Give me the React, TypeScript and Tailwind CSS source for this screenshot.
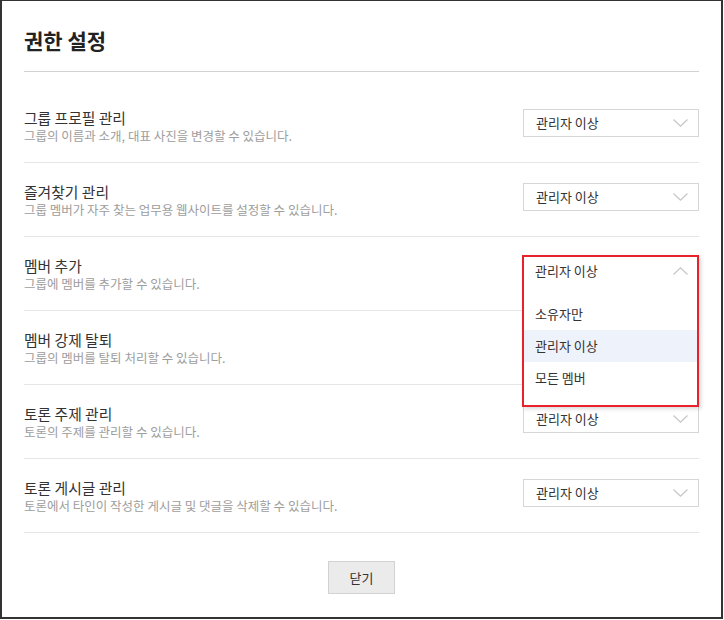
const rules = [
  { title: '그룹 프로필 관리', desc: '그룹의 이름과 소개, 대표 사진을 변경할 수 있습니다.' },
  { title: '즐겨찾기 관리', desc: '그룹 멤버가 자주 찾는 업무용 웹사이트를 설정할 수 있습니다.' },
  { title: '멤버 추가', desc: '그룹에 멤버를 추가할 수 있습니다.', open: true },
  { title: '멤버 강제 탈퇴', desc: '그룹의 멤버를 탈퇴 처리할 수 있습니다.' },
  { title: '토론 주제 관리', desc: '토론의 주제를 관리할 수 있습니다.' },
  { title: '토론 게시글 관리', desc: '토론에서 타인이 작성한 게시글 및 댓글을 삭제할 수 있습니다.' },
];

const options = ['소유자만', '관리자 이상', '모든 멤버'];

function Chevron({ up }: { up?: boolean }) {
  return (
    <svg width="15" height="8" viewBox="0 0 15 8" fill="none" className="shrink-0">
      <polyline
        points={up ? '0.5,7.5 7.5,0.8 14.5,7.5' : '0.5,0.5 7.5,7.2 14.5,0.5'}
        stroke="#c6c6c6"
        strokeWidth="1.2"
      />
    </svg>
  );
}

function Select({ open }: { open?: boolean }) {
  return (
    <div className="relative w-[176px] shrink-0">
      <div className="flex h-[28px] items-center justify-between border border-[#d6d6d6] bg-white pl-[12px] pr-[10px] text-[13px] text-[#333]">
        <span>관리자 이상</span>
        <Chevron />
      </div>

      {open && (
        <div className="absolute left-[-1px] top-[-2px] z-10 w-[177px] border-2 border-[#e8212b] bg-white shadow-[2px_2px_4px_rgba(0,0,0,0.15)]">
          <div className="flex h-[28px] items-center justify-between pl-[11px] pr-[9px] text-[13px] text-[#333]">
            <span>관리자 이상</span>
            <Chevron up />
          </div>
          <ul className="pb-[11px] pt-[13px]">
            {options.map((opt) => (
              <li
                key={opt}
                className={`flex h-[32px] items-center pl-[11px] text-[13px] text-[#333] ${
                  opt === '관리자 이상' ? 'bg-[#eef2fb]' : ''
                }`}
              >
                {opt}
              </li>
            ))}
          </ul>
        </div>
      )}
    </div>
  );
}

export default function App() {
  return (
    <div
      className="h-[620px] w-[724px] bg-white pb-px pr-px"
      style={{ fontFamily: '"Noto Sans CJK KR", "Noto Sans", sans-serif' }}
    >
      <div className="flex h-full flex-col border-b-2 border-l-2 border-r-2 border-t border-[#333] px-[22px]">
        {/* Header */}
        <div className="border-b border-[#d2d2d2] pb-[17px] pt-[25px]">
          <h1 className="text-[21px] font-bold leading-[28px] text-[#222]">권한 설정</h1>
        </div>

        {/* Rules */}
        <div className="mt-[17px]">
          {rules.map((rule) => (
            <div
              key={rule.title}
              className="flex h-[74px] items-start justify-between border-b border-[#e6e6e6] pt-[20px]"
            >
              <div>
                <p className="text-[14.8px] leading-[18px] text-[#333]">{rule.title}</p>
                <p className="text-[12.5px] leading-[17px] text-[#9d9d9d]">{rule.desc}</p>
              </div>
              <Select open={rule.open} />
            </div>
          ))}
        </div>

        {/* Footer */}
        <div className="mt-[28px] flex justify-center">
          <button className="h-[33px] w-[67px] border border-[#d2d2d2] bg-[#ebebeb] text-[13px] text-[#333]">
            닫기
          </button>
        </div>
      </div>
    </div>
  );
}
